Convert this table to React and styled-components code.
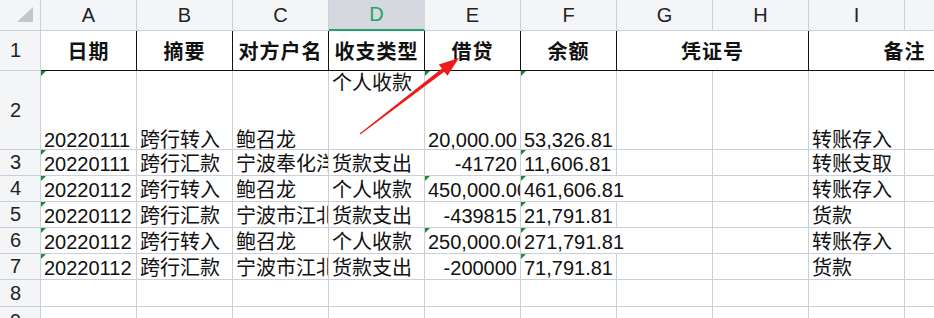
import React from 'react'
import styled, { createGlobalStyle, css } from 'styled-components'

const GlobalStyle = createGlobalStyle`
  body {
    margin: 0;
    background: #fff;
    font-family: "Liberation Sans", "Noto Sans CJK SC", sans-serif;
  }
`

const GRID = '#c9cfdb'
const HEAD_BG = '#f4f5f7'
const GREEN = '#1fa56a'

const COLUMNS = ['A', 'B', 'C', 'D', 'E', 'F', 'G', 'H', 'I', 'J']

const TITLES = [
  { text: '日期' },
  { text: '摘要' },
  { text: '对方户名' },
  { text: '收支类型' },
  { text: '借贷' },
  { text: '余额' },
  { text: '凭证号', span: 2 },
  { text: '备注', span: 2, open: true }
]

// each cell: [text, options]
const ROWS = [
  [
    ['20220111', { flag: true }], ['跨行转入'], ['鲍召龙'], ['个人收款', { top: true }],
    ['20,000.00', { align: 'right', flag: true }], ['53,326.81', { flag: true }],
    [''], [''], ['转账存入'], ['']
  ],
  [
    ['20220111', { flag: true }], ['跨行汇款'], ['宁波奉化洋溪'], ['货款支出'],
    ['-41720', { align: 'right' }], ['11,606.81', { flag: true }],
    [''], [''], ['转账支取'], ['']
  ],
  [
    ['20220112', { flag: true }], ['跨行转入'], ['鲍召龙'], ['个人收款'],
    ['450,000.00', { flag: true }], ['461,606.81', { flag: true, spill: true }],
    [''], [''], ['转账存入'], ['']
  ],
  [
    ['20220112', { flag: true }], ['跨行汇款'], ['宁波市江北区'], ['货款支出'],
    ['-439815', { align: 'right' }], ['21,791.81', { flag: true }],
    [''], [''], ['货款'], ['']
  ],
  [
    ['20220112', { flag: true }], ['跨行转入'], ['鲍召龙'], ['个人收款'],
    ['250,000.00', { flag: true }], ['271,791.81', { flag: true, spill: true }],
    [''], [''], ['转账存入'], ['']
  ],
  [
    ['20220112', { flag: true }], ['跨行汇款'], ['宁波市江北区'], ['货款支出'],
    ['-200000', { align: 'right' }], ['71,791.81', { flag: true }],
    [''], [''], ['货款'], ['']
  ]
]

const Sheet = styled.div`
  position: relative;
  width: 934px;
  height: 318px;
  overflow: hidden;
`

const Grid = styled.div`
  display: grid;
  grid-template-columns: 41px repeat(10, 96px);
  grid-template-rows: 31px 40px 79px 26px 26px 26px 26px 26px 27px 30px;
`

const Corner = styled.div`
  position: relative;
  background: ${HEAD_BG};
  border-right: 1px solid ${GRID};
  border-bottom: 1px solid ${GRID};

  &::after {
    content: '';
    position: absolute;
    right: 7px;
    bottom: 8px;
    border-style: solid;
    border-width: 0 0 15px 16px;
    border-color: transparent transparent #c3c6cc transparent;
  }
`

const ColHead = styled.div`
  display: flex;
  align-items: center;
  justify-content: center;
  background: ${HEAD_BG};
  border-right: 1px solid ${GRID};
  border-bottom: 1px solid ${GRID};
  font-size: 20px;
  color: #222;

  ${p => p.$active && css`
    background: #d5d8df;
    color: ${GREEN};
    border-right-color: #d5d8df;
    border-bottom: 2px solid ${GREEN};
  `}
`

const RowHead = styled.div`
  display: flex;
  align-items: center;
  justify-content: center;
  padding-right: 9px;
  background: ${HEAD_BG};
  border-right: 1px solid ${GRID};
  border-bottom: 1px solid ${GRID};
  font-size: 20px;
  color: #222;
`

const Title = styled.div`
  grid-column: span ${p => p.$span || 1};
  display: flex;
  align-items: center;
  justify-content: center;
  border-right: 1px solid ${p => (p.$open ? 'transparent' : '#111')};
  border-bottom: 1px solid #111;
  font-family: "Noto Sans CJK SC", serif;
  font-weight: 700;
  font-size: 20px;
  letter-spacing: 1px;
  color: #111;
`

const Cell = styled.div`
  position: relative;
  display: flex;
  align-items: ${p => (p.$top ? 'flex-start' : 'flex-end')};
  justify-content: ${p => (p.$align === 'right' ? 'flex-end' : 'flex-start')};
  padding: ${p => (p.$top ? '1px 3px 0' : '0 3px')};
  border-right: 1px solid ${p => (p.$spill ? 'transparent' : GRID)};
  border-bottom: 1px solid ${GRID};
  overflow: ${p => (p.$spill ? 'visible' : 'hidden')};
  white-space: nowrap;
  font-size: 20px;
  line-height: ${p => (p.$tall ? '18px' : '22px')};
  color: #111;

  ${p => p.$flag && css`
    &::before {
      content: '';
      position: absolute;
      left: 0;
      top: 0;
      border-style: solid;
      border-width: 5px 5px 0 0;
      border-color: #1c8a35 transparent transparent transparent;
    }
  `}
`

const Arrow = styled.svg`
  position: absolute;
  left: 0;
  top: 0;
  pointer-events: none;
`

export default function App () {
  return (
    <Sheet>
      <GlobalStyle />
      <Grid>
        <Corner />
        {COLUMNS.map(c => (
          <ColHead key={c} $active={c === 'D'}>{c}</ColHead>
        ))}

        <RowHead>1</RowHead>
        {TITLES.map(t => (
          <Title key={t.text} $span={t.span} $open={t.open}>{t.text}</Title>
        ))}

        {ROWS.map((row, r) => (
          <React.Fragment key={r}>
            <RowHead>{r + 2}</RowHead>
            {row.map(([text, opts = {}], c) => (
              <Cell
                key={c}
                $align={opts.align}
                $top={opts.top}
                $flag={opts.flag}
                $spill={opts.spill}
                $tall={r === 0 && !opts.top}
              >
                {text}
              </Cell>
            ))}
          </React.Fragment>
        ))}

        {[8, 9].map(n => (
          <React.Fragment key={n}>
            <RowHead>{n}</RowHead>
            {COLUMNS.map(c => <Cell key={c} />)}
          </React.Fragment>
        ))}
      </Grid>

      <Arrow width='934' height='318' viewBox='0 0 934 318'>
        <polygon
          fill='#ec1c1c'
          points='459,58 447.4,75.8 444.3,71.8 360.3,134.4 359.7,133.6 441.9,68.6 438.8,64.6'
        />
      </Arrow>
    </Sheet>
  )
}
